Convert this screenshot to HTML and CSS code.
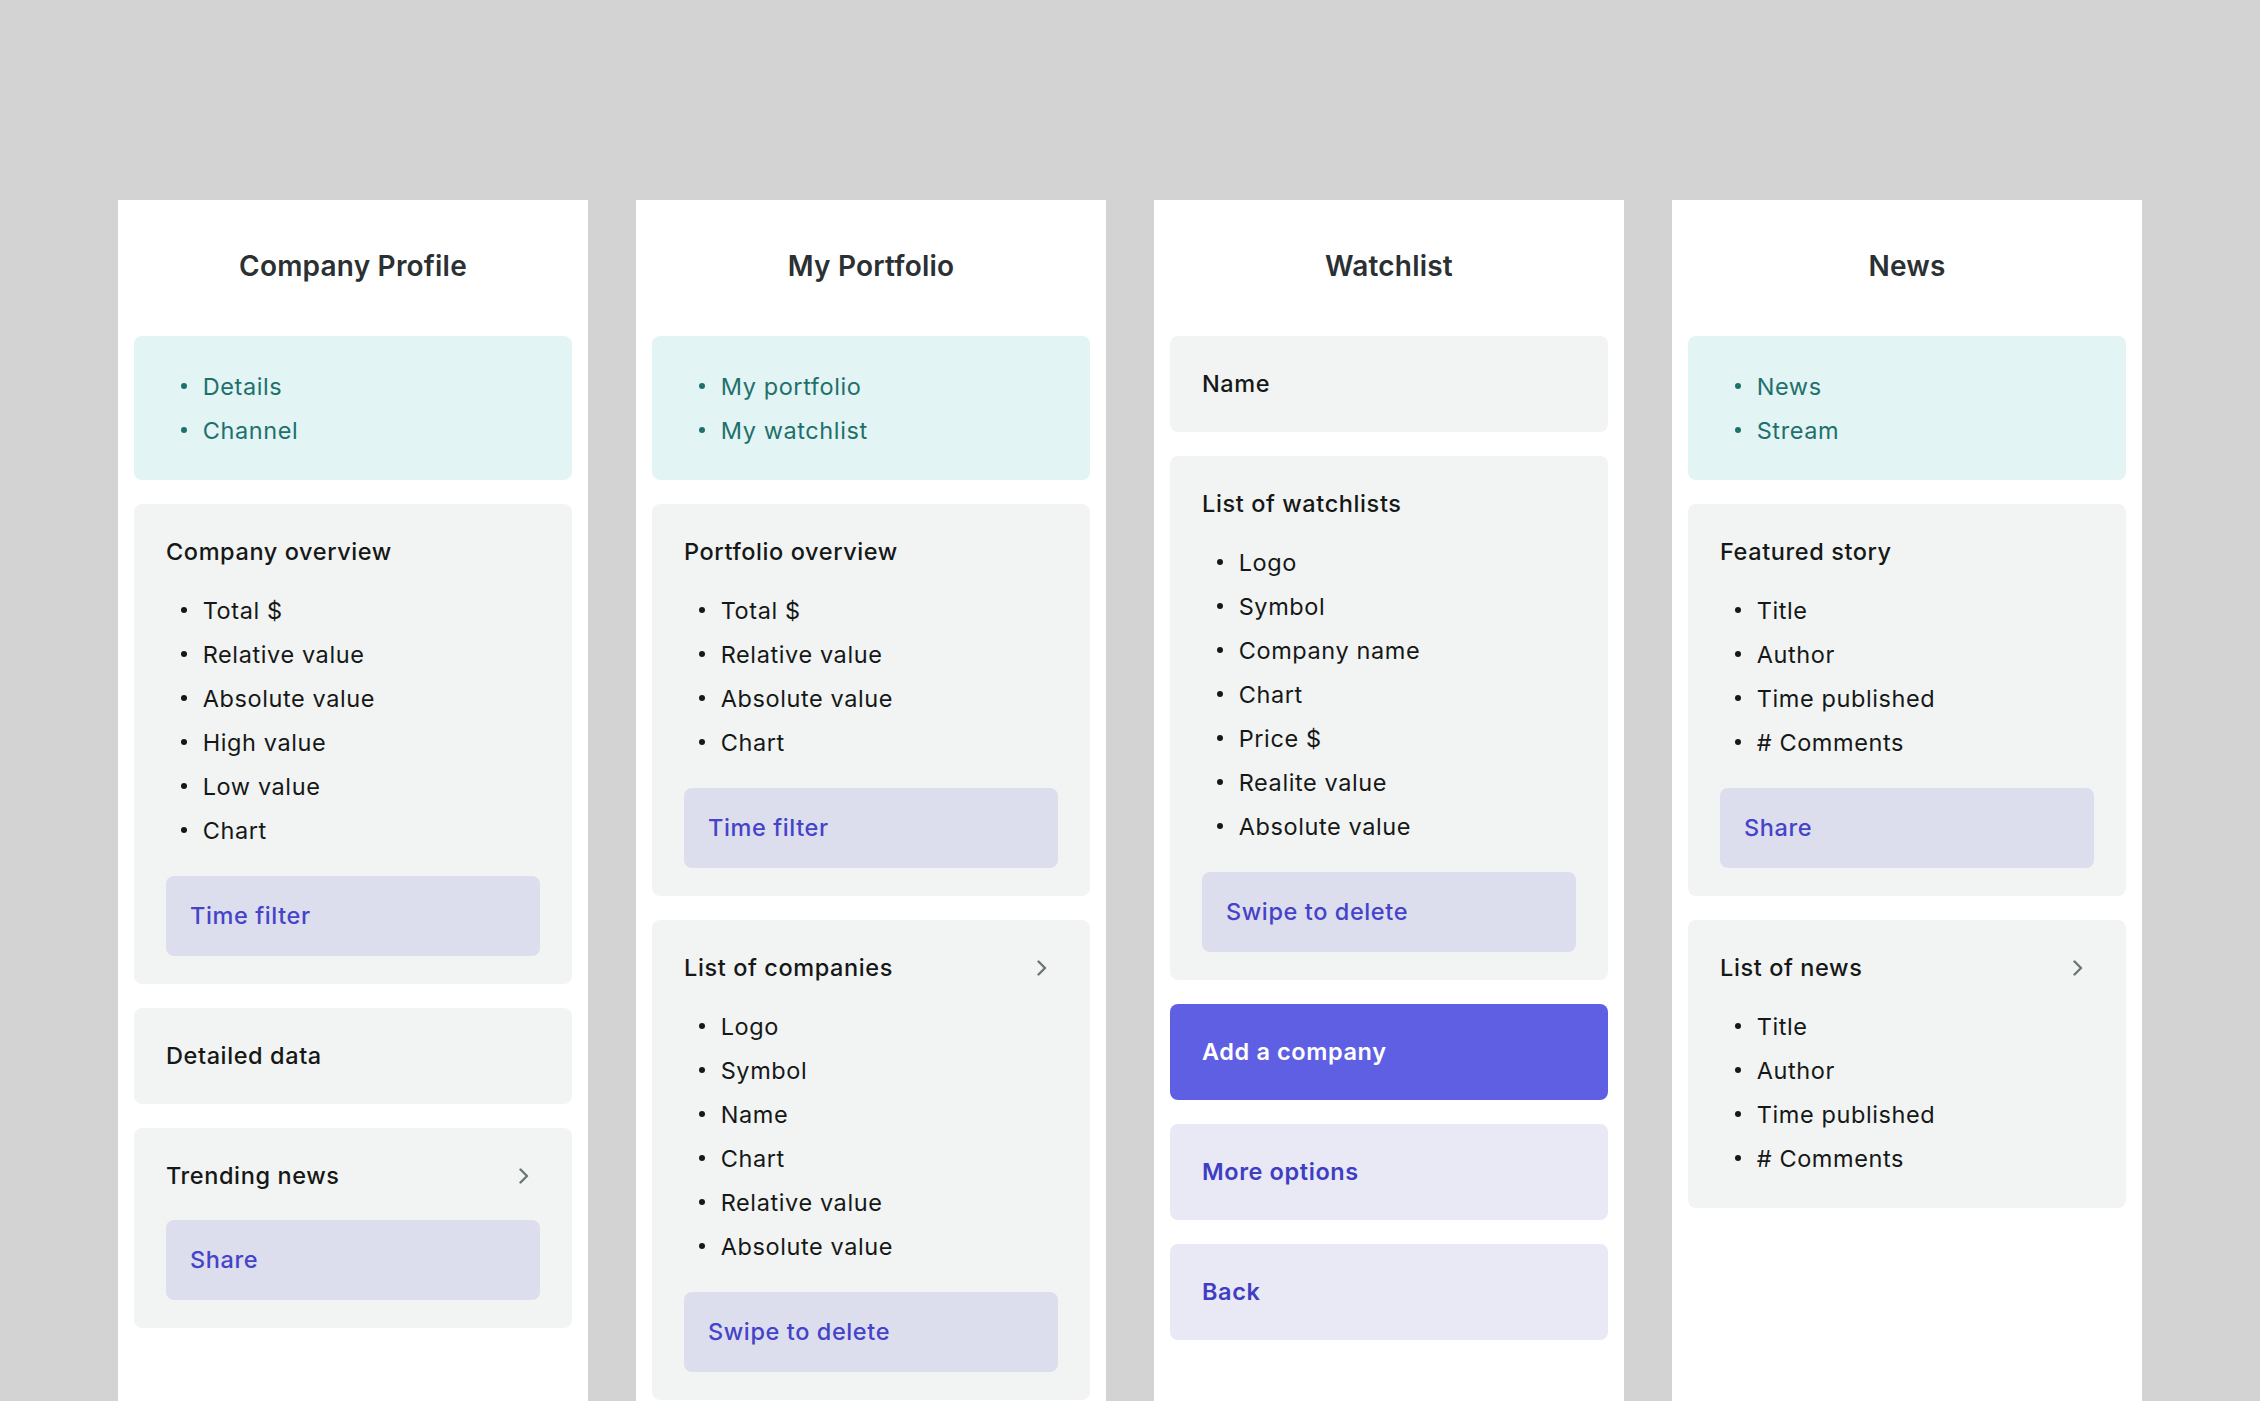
FILE: index.html
```html
<!DOCTYPE html>
<html lang="en">
<head>
  <meta charset="UTF-8">
  <meta name="viewport" content="width=device-width, initial-scale=1.0">
  <title>App screens</title>
  <link rel="stylesheet" href="styles.css">
</head>
<body>
  <main class="board">

    <section class="screen">
      <h2 class="screen-title">Company Profile</h2>
      <div class="stack">
        <ul class="block tabs">
          <li>Details</li>
          <li>Channel</li>
        </ul>
        <div class="block card">
          <h3 class="card-title">Company overview</h3>
          <ul class="bullets">
            <li>Total $</li>
            <li>Relative value</li>
            <li>Absolute value</li>
            <li>High value</li>
            <li>Low value</li>
            <li>Chart</li>
          </ul>
          <div class="action">Time filter</div>
        </div>
        <div class="block card card-plain">
          <h3 class="card-title">Detailed data</h3>
        </div>
        <div class="block card">
          <div class="card-head">
            <h3 class="card-title">Trending news</h3>
            <svg class="chevron" viewBox="0 0 12 16" width="12" height="16"><path d="M2.5 1.5L9 8l-6.5 6.5"/></svg>
          </div>
          <div class="action">Share</div>
        </div>
      </div>
    </section>

    <section class="screen">
      <h2 class="screen-title">My Portfolio</h2>
      <div class="stack">
        <ul class="block tabs">
          <li>My portfolio</li>
          <li>My watchlist</li>
        </ul>
        <div class="block card">
          <h3 class="card-title">Portfolio overview</h3>
          <ul class="bullets">
            <li>Total $</li>
            <li>Relative value</li>
            <li>Absolute value</li>
            <li>Chart</li>
          </ul>
          <div class="action">Time filter</div>
        </div>
        <div class="block card">
          <div class="card-head">
            <h3 class="card-title">List of companies</h3>
            <svg class="chevron" viewBox="0 0 12 16" width="12" height="16"><path d="M2.5 1.5L9 8l-6.5 6.5"/></svg>
          </div>
          <ul class="bullets">
            <li>Logo</li>
            <li>Symbol</li>
            <li>Name</li>
            <li>Chart</li>
            <li>Relative value</li>
            <li>Absolute value</li>
          </ul>
          <div class="action">Swipe to delete</div>
        </div>
      </div>
    </section>

    <section class="screen">
      <h2 class="screen-title">Watchlist</h2>
      <div class="stack">
        <div class="block card card-plain">
          <h3 class="card-title">Name</h3>
        </div>
        <div class="block card">
          <h3 class="card-title">List of watchlists</h3>
          <ul class="bullets">
            <li>Logo</li>
            <li>Symbol</li>
            <li>Company name</li>
            <li>Chart</li>
            <li>Price $</li>
            <li>Realite value</li>
            <li>Absolute value</li>
          </ul>
          <div class="action">Swipe to delete</div>
        </div>
        <div class="block button button-primary">Add a company</div>
        <div class="block button">More options</div>
        <div class="block button">Back</div>
      </div>
    </section>

    <section class="screen">
      <h2 class="screen-title">News</h2>
      <div class="stack">
        <ul class="block tabs">
          <li>News</li>
          <li>Stream</li>
        </ul>
        <div class="block card">
          <h3 class="card-title">Featured story</h3>
          <ul class="bullets">
            <li>Title</li>
            <li>Author</li>
            <li>Time published</li>
            <li># Comments</li>
          </ul>
          <div class="action">Share</div>
        </div>
        <div class="block card">
          <div class="card-head">
            <h3 class="card-title">List of news</h3>
            <svg class="chevron" viewBox="0 0 12 16" width="12" height="16"><path d="M2.5 1.5L9 8l-6.5 6.5"/></svg>
          </div>
          <ul class="bullets">
            <li>Title</li>
            <li>Author</li>
            <li>Time published</li>
            <li># Comments</li>
          </ul>
        </div>
      </div>
    </section>

  </main>
</body>
</html>
```

FILE: styles.css
```css
html, body {
  margin: 0;
  height: 100%;
}
body {
  background: #d3d3d3;
  font-family: Inter, "Noto Sans", sans-serif;
  font-size: 23.5px;
  letter-spacing: 0.6px;
  color: #161818;
  overflow: hidden;
}
.board {
  display: flex;
  justify-content: center;
  gap: 48px;
  padding-top: 200px;
  height: 100vh;
  box-sizing: border-box;
}
.screen {
  width: 470px;
  background: #fff;
  padding: 0 16px;
  box-sizing: border-box;
}
.screen-title {
  height: 136px;
  margin: 0;
  padding-bottom: 5px;
  box-sizing: border-box;
  display: flex;
  align-items: center;
  justify-content: center;
  font-size: 28px;
  font-weight: 600;
  letter-spacing: 0.2px;
  color: #2b3033;
}
.stack {
  display: flex;
  flex-direction: column;
  gap: 24px;
}
.block {
  border-radius: 8px;
}

/* tab list */
.tabs {
  margin: 0;
  padding: 28px 32px;
  list-style: none;
  background: #e2f4f4;
  color: #1f706c;
}

/* cards */
.card {
  background: #f2f4f3;
  padding: 32px 32px 28px;
}
.card-plain {
  padding-bottom: 32px;
}
.card-title {
  margin: 0;
  font-size: 23.5px;
  font-weight: 500;
  line-height: 32px;
}
.card-head {
  display: flex;
  align-items: center;
  justify-content: space-between;
}
.chevron {
  margin-right: 10px;
  fill: none;
  stroke: #6b7577;
  stroke-width: 2.4;
  stroke-linecap: round;
  stroke-linejoin: round;
}

/* bullet lists */
.tabs li,
.bullets li {
  display: flex;
  align-items: center;
  height: 44px;
}
.tabs li::before,
.bullets li::before {
  content: "";
  flex: none;
  width: 6px;
  height: 6px;
  margin: 0 15.7px 0 15px;
  border-radius: 50%;
  background: currentColor;
}
.bullets {
  margin: 20px 0 0;
  padding: 0;
  list-style: none;
}

/* actions */
.action {
  margin-top: 24px;
  padding: 24px;
  line-height: 32px;
  border-radius: 8px;
  background: #dddeed;
  color: #4443c9;
  font-weight: 500;
}
.card-head + .action {
  margin-top: 28px;
}
.button {
  padding: 32px;
  line-height: 32px;
  background: #e9e9f6;
  color: #3f3ec2;
  font-weight: 600;
}
.button-primary {
  background: #5f5fe4;
  color: #fff;
}
```
